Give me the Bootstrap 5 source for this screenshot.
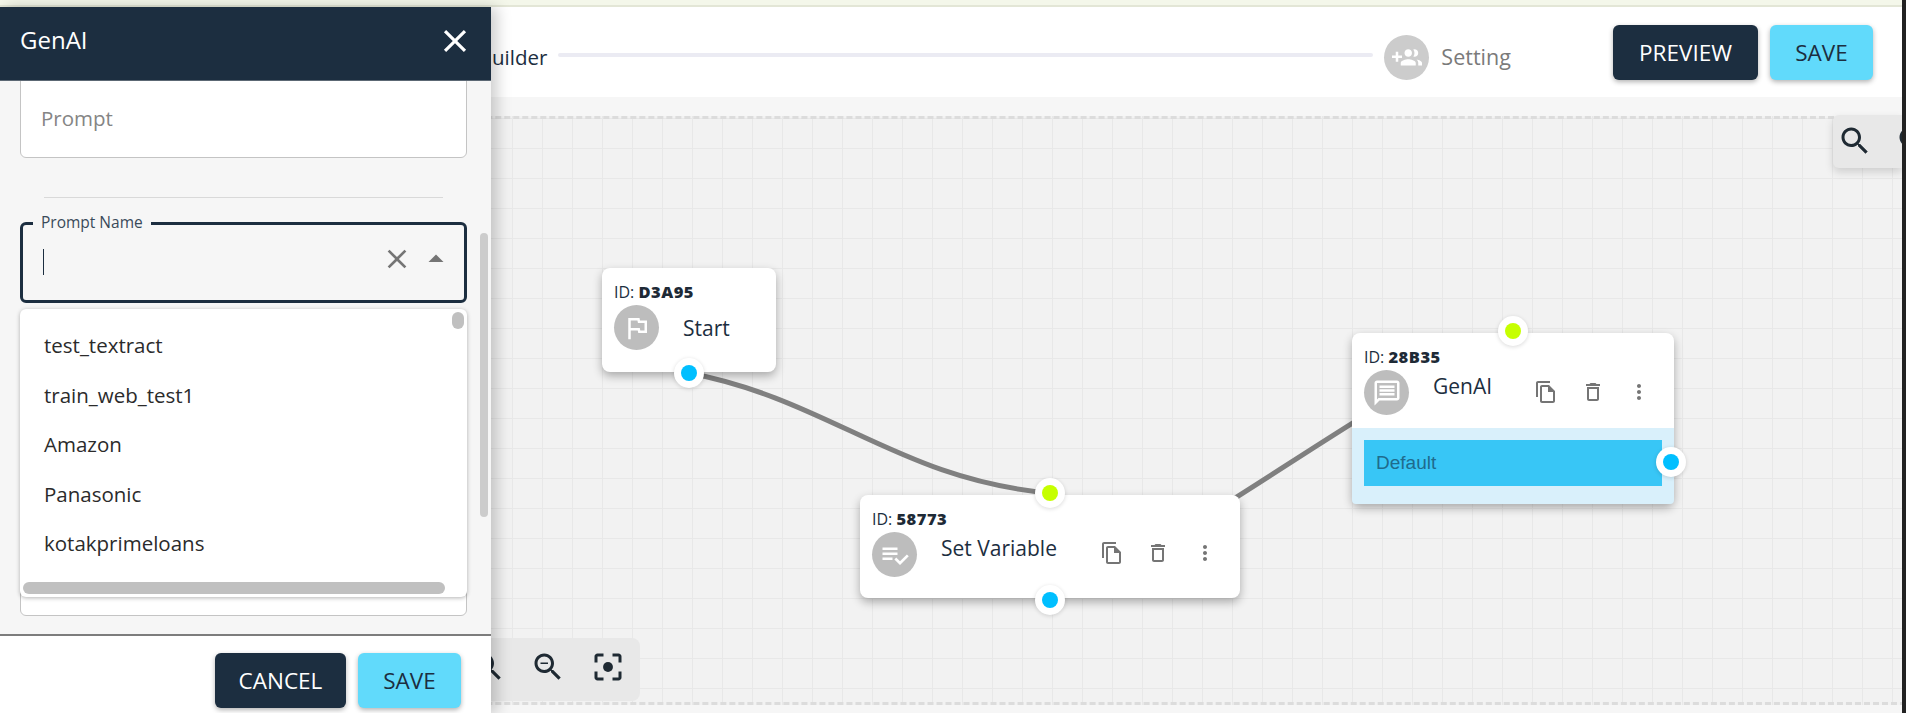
<!doctype html>
<html lang="en">
<head>
<meta charset="utf-8">
<title>Flow builder</title>
<link href="https://cdn.jsdelivr.net/npm/bootstrap@5.3.0/dist/css/bootstrap.min.css" rel="stylesheet">
<style>
html,body{height:100%;overflow:hidden}
body{font-family:"Open Sans","Liberation Sans",sans-serif;color:#1c2e40;background:#f6f6f6}
.page-wrap{position:relative;width:1906px;height:713px;overflow:hidden}
.win-edge{position:absolute;left:1902px;top:0;width:4px;height:713px;background:#222;z-index:9}
.top-strip{height:7px;background:#f4f7ea;border-bottom:2px solid #e3e6d6}
.build-head{height:90px;background:#fff;padding:18px 33px 0 492px}
.step-text{font-size:20.5px;line-height:24px;margin-top:20px;color:#1c2e40}
.step-line{width:815px;height:4px;background:#ebebf3;border-radius:2px;margin:0 11px 0 11px;position:relative;top:-6px}
.step-ava{width:45px;height:45px;border-radius:50%;background:#ccc;margin:10px 12px 0 0}
.step-ava svg{width:30px;height:30px;fill:#fff}
.step-muted{color:#7a7a7a;font-size:21.5px}
.btn-pair{gap:12px}
.act-btn{height:55px;border-radius:6px;font-size:22.5px;font-weight:500;border:0;padding:0;box-shadow:0 2px 5px rgba(0,0,0,.3)}
.btn-navy,.btn-navy:hover{background:#1c2e40;color:#fff}
.btn-sky,.btn-sky:hover{background:#61dafb;color:#1c2e40}
.w-prev{width:145px}.w-save{width:103px}.w-cancel{width:131px}
.canvas-wrap{height:616px;padding:19px 0 8px 0}
.flow-canvas{position:relative;height:589px;border-top:3px dashed #dcdcdc;border-bottom:3px dashed #dcdcdc;
 background-color:#f2f2f2;background-image:linear-gradient(#e8e8e8 1px,transparent 1px),linear-gradient(90deg,#e8e8e8 1px,transparent 1px);background-size:30px 30px;background-position:2px -1px}
.flow-edges{position:absolute;left:0;top:-119px;width:1906px;height:713px;pointer-events:none}
.flow-edges path{fill:none;stroke:#808080;stroke-width:5}
.flow-node{position:absolute;background:#fff;border-radius:8px;box-shadow:0 4px 10px rgba(0,0,0,.3);color:#1c2e40}
.node-pad{padding:14px 12px 0}
.node-id{font-size:16px;line-height:20px;height:23px;white-space:nowrap}
.node-id b{font-weight:800;font-size:16.5px;letter-spacing:.5px;color:#1e2a36}
.node-ava{width:45px;height:45px;border-radius:50%;background:#bdbdbd;flex:none}
.node-ava svg{width:30px;height:30px;fill:#fff}
.node-title{font-size:21px;line-height:24px;margin:4px 0 0 24px;white-space:nowrap}
.title-low{margin-top:11px}
.tool-ico{position:absolute;width:24px;height:24px;fill:#757575}
.flow-port{position:absolute;width:30px;height:30px;border-radius:50%;background:#fff;box-shadow:0 1px 4px rgba(0,0,0,.15);display:flex;align-items:center;justify-content:center;z-index:2}
.flow-port i{display:block;width:16px;height:16px;border-radius:50%}
.port-in i{background:#c6ff00}
.port-out i{background:#00bfff}
.choice-zone{position:absolute;left:0;right:0;bottom:0;height:76px;background:#d9f0fb;padding:12px;border-radius:0 0 4px 4px}
.choice-bar{height:46px;background:#38c6f6;color:#1f6b8c;font-family:"Liberation Sans",sans-serif;font-size:19px;line-height:46px;padding-left:12px}
.zoom-box{position:absolute;background:#e8e8e8;display:flex;align-items:center}
.zoom-box svg{fill:#1f2a33;flex:none}
.zoom-right{left:1833px;top:-4px;width:69px;height:53px;box-shadow:0 4px 8px rgba(0,0,0,.15);padding:0 0 2px 4px;gap:22px;border-radius:6px 0 0 6px;overflow:hidden}
.zoom-left{left:440px;top:519px;width:200px;height:63px;border-radius:8px;justify-content:flex-end;padding:0 14px 6px 0;gap:24px}
.side-drawer{position:absolute;left:0;top:7px;bottom:0;width:491px;background:#f6f6f6;box-shadow:6px 0 14px rgba(0,0,0,.2);display:flex;flex-direction:column;z-index:5}
.drawer-head{height:74px;background:#1c2e40;color:#fff;padding:0 17px 6px 20px;flex:none;border-bottom:1px solid #5c6874}
.drawer-head h1{font-size:24px;font-weight:400;margin:0;font-family:inherit}
.drawer-head svg{width:38px;height:38px;fill:#fff}
.drawer-body{position:relative;flex:1;overflow:hidden}
.prompt-area{position:absolute;left:20px;top:-30px;width:447px;height:107px;background:#fff;border:1px solid #c4c4c4;border-radius:6px;padding:54px 0 0 20px;font-size:20.5px;line-height:24px;color:#858585}
.drawer-rule{position:absolute;left:44px;top:116px;width:399px;height:1px;background:#d9d9d9}
.name-field{position:absolute;left:20px;top:141px;width:447px;height:81px;border:3px solid #1c2e40;border-radius:6px}
.name-field label{position:absolute;left:10px;top:-12px;padding:0 8px;background:#f6f6f6;font-size:15.5px;line-height:18px;color:#3a4a5a}
.text-caret{position:absolute;left:20px;top:24px;width:1px;height:26px;background:#1c2e40}
.name-field svg{position:absolute;fill:#757575}
.under-field{position:absolute;left:20px;top:480px;width:447px;height:55px;background:#fff;border:1px solid #c4c4c4;border-radius:6px}
.option-panel{position:absolute;left:20px;top:228px;width:447px;height:288px;background:#fff;border-radius:6px;box-shadow:0 1px 4px rgba(0,0,0,.3);padding:12px 0 0 24px;overflow:hidden}
.option-row{height:49.5px;line-height:49.5px;font-size:20.5px;color:#2b2b2b}
.thumb-v{position:absolute;left:432px;top:3px;width:12px;height:17px;background:#c0c0c0;border-radius:6px}
.thumb-h{position:absolute;left:3px;top:273px;width:422px;height:12px;background:#c0c0c0;border-radius:6px}
.drawer-thumb{position:absolute;left:480px;top:152px;width:8px;height:284px;background:#ccc;border-radius:4px}
.drawer-foot{height:79px;background:#fff;border-top:2px solid #7d7d7d;flex:none;padding:17px 30px 0 0}
</style>
</head>
<body>
<div class="page-wrap">
  <div class="top-strip"></div>
  <div class="build-head d-flex align-items-start">
    <span class="step-text">uilder</span>
    <div class="step-line align-self-center"></div>
    <div class="step-ava d-flex align-items-center justify-content-center"><svg viewBox="0 0 24 24"><path d="M8 10H5V7H3v3H0v2h3v3h2v-3h3v-2zm10 1c1.66 0 2.99-1.34 2.99-3S19.66 5 18 5c-.32 0-.63.05-.91.14.57.81.9 1.79.9 2.86s-.34 2.04-.9 2.86c.28.09.59.14.91.14zm-5 0c1.66 0 2.99-1.34 2.99-3S14.66 5 13 5s-3 1.34-3 3 1.34 3 3 3zm6.62 2.16c.83.73 1.38 1.66 1.38 2.84v2h3v-2c0-1.54-2.37-2.49-4.38-2.84zM13 13c-2 0-6 1-6 3v2h12v-2c0-2-4-3-6-3z"/></svg></div>
    <span class="step-text step-muted">Setting</span>
    <div class="d-flex btn-pair ms-auto">
      <button class="btn act-btn btn-navy w-prev">PREVIEW</button>
      <button class="btn act-btn btn-sky w-save">SAVE</button>
    </div>
  </div>
  <div class="canvas-wrap">
    <div class="flow-canvas">
      <svg class="flow-edges" viewBox="0 0 1906 713"><path d="M689 373C830 400 900 480 1050 493"/><path d="M1050 600C1210 530 1320 430 1513 331"/></svg>

      <div class="flow-node" style="left:602px;top:149px;width:174px;height:104px">
        <div class="node-pad">
          <div class="node-id">ID: <b>D3A95</b></div>
          <div class="d-flex"><div class="node-ava d-flex align-items-center justify-content-center"><svg viewBox="0 0 24 24"><path d="M12.36 6l.4 2H18v6h-3.36l-.4-2H7V6h5.36M14 4H5v17h2v-7h5.6l.4 2h7V6h-5.6L14 4z"/></svg></div><div class="node-title title-low">Start</div></div>
        </div>
        <div class="flow-port port-out" style="left:72px;top:90px"><i></i></div>
      </div>

      <div class="flow-node" style="left:860px;top:376px;width:380px;height:103px">
        <div class="node-pad">
          <div class="node-id">ID: <b>58773</b></div>
          <div class="d-flex"><div class="node-ava d-flex align-items-center justify-content-center"><svg viewBox="0 0 24 24"><path d="M14 10H2v2h12v-2zm0-4H2v2h12V6zM2 16h8v-2H2v2zm19.5-4.5L23 13l-6.99 7-4.51-4.5L13 14l3.01 3 5.49-5.5z"/></svg></div><div class="node-title">Set Variable</div></div>
        </div>
        <svg class="tool-ico" style="left:240px;top:46px" viewBox="0 0 24 24"><path d="M16 1H4c-1.1 0-2 .9-2 2v14h2V3h12V1zm-1 4H8c-1.1 0-1.99.9-1.99 2L6 21c0 1.1.89 2 1.99 2H19c1.1 0 2-.9 2-2V11l-6-6zM8 21V7h6v5h5v9H8z"/></svg>
        <svg class="tool-ico" style="left:286px;top:46px" viewBox="0 0 24 24"><path d="M6 19c0 1.1.9 2 2 2h8c1.1 0 2-.9 2-2V7H6v12zM8 9h8v10H8V9zm7.5-5l-1-1h-5l-1 1H5v2h14V4z"/></svg>
        <svg class="tool-ico" style="left:333px;top:46px" viewBox="0 0 24 24"><path d="M12 8c1.1 0 2-.9 2-2s-.9-2-2-2-2 .9-2 2 .9 2 2 2zm0 2c-1.1 0-2 .9-2 2s.9 2 2 2 2-.9 2-2-.9-2-2-2zm0 6c-1.1 0-2 .9-2 2s.9 2 2 2 2-.9 2-2-.9-2-2-2z"/></svg>
        <div class="flow-port port-in" style="left:175px;top:-17px"><i></i></div>
        <div class="flow-port port-out" style="left:175px;top:90px"><i></i></div>
      </div>

      <div class="flow-node" style="left:1352px;top:214px;width:322px;height:171px">
        <div class="node-pad">
          <div class="node-id">ID: <b>28B35</b></div>
          <div class="d-flex"><div class="node-ava d-flex align-items-center justify-content-center"><svg viewBox="0 0 24 24"><path d="M20 2H4c-1.1 0-2 .9-2 2v18l4-4h14c1.1 0 2-.9 2-2V4c0-1.1-.9-2-2-2zm0 14H5.17L4 17.17V4h16v12zM6 12h12v2H6zm0-3h12v2H6zm0-3h12v2H6z"/></svg></div><div class="node-title">GenAI</div></div>
        </div>
        <svg class="tool-ico" style="left:182px;top:47px" viewBox="0 0 24 24"><path d="M16 1H4c-1.1 0-2 .9-2 2v14h2V3h12V1zm-1 4H8c-1.1 0-1.99.9-1.99 2L6 21c0 1.1.89 2 1.99 2H19c1.1 0 2-.9 2-2V11l-6-6zM8 21V7h6v5h5v9H8z"/></svg>
        <svg class="tool-ico" style="left:229px;top:47px" viewBox="0 0 24 24"><path d="M6 19c0 1.1.9 2 2 2h8c1.1 0 2-.9 2-2V7H6v12zM8 9h8v10H8V9zm7.5-5l-1-1h-5l-1 1H5v2h14V4z"/></svg>
        <svg class="tool-ico" style="left:275px;top:47px" viewBox="0 0 24 24"><path d="M12 8c1.1 0 2-.9 2-2s-.9-2-2-2-2 .9-2 2 .9 2 2 2zm0 2c-1.1 0-2 .9-2 2s.9 2 2 2 2-.9 2-2-.9-2-2-2zm0 6c-1.1 0-2 .9-2 2s.9 2 2 2 2-.9 2-2-.9-2-2-2z"/></svg>
        <div class="choice-zone"><div class="choice-bar">Default</div></div>
        <div class="flow-port port-in" style="left:146px;top:-17px"><i></i></div>
        <div class="flow-port port-out" style="left:304px;top:114px"><i></i></div>
      </div>

      <div class="zoom-box zoom-right">
        <svg width="36" height="36" viewBox="0 0 24 24"><path d="M15.5 14h-.79l-.28-.27C15.41 12.59 16 11.11 16 9.5 16 5.91 13.09 3 9.5 3S3 5.91 3 9.5 5.91 16 9.5 16c1.61 0 3.09-.59 4.23-1.57l.27.28v.79l5 4.99L20.49 19l-4.99-5zm-6 0C7.01 14 5 11.99 5 9.5S7.01 5 9.5 5 14 7.01 14 9.5 11.99 14 9.5 14z"/></svg>
        <svg width="36" height="36" viewBox="0 0 24 24"><path d="M15.5 14h-.79l-.28-.27C15.41 12.59 16 11.11 16 9.5 16 5.91 13.09 3 9.5 3S3 5.91 3 9.5 5.91 16 9.5 16c1.61 0 3.09-.59 4.23-1.57l.27.28v.79l5 4.99L20.49 19l-4.99-5zm-6 0C7.01 14 5 11.99 5 9.5S7.01 5 9.5 5 14 7.01 14 9.5 11.99 14 9.5 14zM7 9h5v1H7z"/></svg>
      </div>
      <div class="zoom-box zoom-left">
        <svg width="36" height="36" viewBox="0 0 24 24"><path d="M15.5 14h-.79l-.28-.27C15.41 12.59 16 11.11 16 9.5 16 5.91 13.09 3 9.5 3S3 5.91 3 9.5 5.91 16 9.5 16c1.61 0 3.09-.59 4.23-1.57l.27.28v.79l5 4.99L20.49 19l-4.99-5zm-6 0C7.01 14 5 11.99 5 9.5S7.01 5 9.5 5 14 7.01 14 9.5 11.99 14 9.5 14zM7 9h5v1H7z"/></svg>
        <svg width="36" height="36" viewBox="0 0 24 24"><path d="M15.5 14h-.79l-.28-.27C15.41 12.59 16 11.11 16 9.5 16 5.91 13.09 3 9.5 3S3 5.91 3 9.5 5.91 16 9.5 16c1.61 0 3.09-.59 4.23-1.57l.27.28v.79l5 4.99L20.49 19l-4.99-5zm-6 0C7.01 14 5 11.99 5 9.5S7.01 5 9.5 5 14 7.01 14 9.5 11.99 14 9.5 14zM7 9h5v1H7z"/></svg>
        <svg width="36" height="36" viewBox="0 0 24 24"><path d="M5 15H3v4c0 1.1.9 2 2 2h4v-2H5v-4zM5 5h4V3H5c-1.1 0-2 .9-2 2v4h2V5zm14-2h-4v2h4v4h2V5c0-1.1-.9-2-2-2zm0 16h-4v2h4c1.1 0 2-.9 2-2v-4h-2v4z"/><circle cx="12" cy="12" r="3.3"/></svg>
      </div>
    </div>
  </div>

  <aside class="side-drawer">
    <div class="drawer-head d-flex align-items-center justify-content-between">
      <h1>GenAI</h1>
      <svg viewBox="0 0 24 24"><path d="M19 6.41 17.59 5 12 10.59 6.41 5 5 6.41 10.59 12 5 17.59 6.41 19 12 13.41 17.59 19 19 17.59 13.41 12z"/></svg>
    </div>
    <div class="drawer-body">
      <div class="prompt-area">Prompt</div>
      <div class="drawer-rule"></div>
      <div class="name-field">
        <label>Prompt Name</label>
        <span class="text-caret"></span>
        <svg style="left:358px;top:18px;width:32px;height:32px" viewBox="0 0 24 24"><path d="M19 6.41 17.59 5 12 10.59 6.41 5 5 6.41 10.59 12 5 17.59 6.41 19 12 13.41 17.59 19 19 17.59 13.41 12z"/></svg>
        <svg style="left:395px;top:16px;width:36px;height:36px" viewBox="0 0 24 24"><path d="M7 14l5-5 5 5z"/></svg>
      </div>
      <div class="under-field"></div>
      <div class="option-panel">
        <div class="option-row">test_textract</div>
        <div class="option-row">train_web_test1</div>
        <div class="option-row">Amazon</div>
        <div class="option-row">Panasonic</div>
        <div class="option-row">kotakprimeloans</div>
        <span class="thumb-v"></span>
        <span class="thumb-h"></span>
      </div>
      <div class="drawer-thumb"></div>
    </div>
    <div class="drawer-foot d-flex justify-content-end btn-pair">
      <button class="btn act-btn btn-navy w-cancel">CANCEL</button>
      <button class="btn act-btn btn-sky w-save">SAVE</button>
    </div>
  </aside>
  <div class="win-edge"></div>
</div>
<script src="https://cdn.jsdelivr.net/npm/bootstrap@5.3.0/dist/js/bootstrap.bundle.min.js"></script>
</body>
</html>
